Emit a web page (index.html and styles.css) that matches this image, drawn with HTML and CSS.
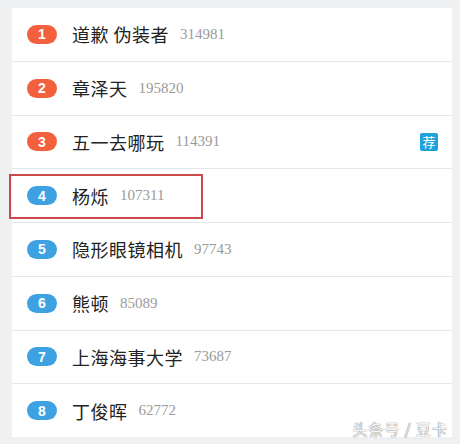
FILE: index.html
```html
<!DOCTYPE html>
<html>
<head>
<meta charset="utf-8">
<link rel="stylesheet" href="styles.css">
</head>
<body>
<div class="page">
  <ul class="list">
    <li class="row"><span class="rank hot">1</span><span class="name">道歉 伪装者</span><span class="count">314981</span></li>
    <li class="row"><span class="rank hot">2</span><span class="name">章泽天</span><span class="count">195820</span></li>
    <li class="row"><span class="rank hot">3</span><span class="name">五一去哪玩</span><span class="count">114391</span><span class="tag">荐</span></li>
    <li class="row"><span class="rank">4</span><span class="name">杨烁</span><span class="count">107311</span></li>
    <li class="row"><span class="rank">5</span><span class="name">隐形眼镜相机</span><span class="count">97743</span></li>
    <li class="row"><span class="rank">6</span><span class="name">熊顿</span><span class="count">85089</span></li>
    <li class="row"><span class="rank">7</span><span class="name">上海海事大学</span><span class="count">73687</span></li>
    <li class="row"><span class="rank">8</span><span class="name">丁俊晖</span><span class="count">62772</span></li>
  </ul>
  <div class="highlight"></div>
  <div class="watermark">头条号 / 豆卡</div>
</div>
</body>
</html>
```
FILE: styles.css
```css
html, body {
  margin: 0;
  padding: 0;
  background: #eff0f2;
}
.page {
  position: relative;
  width: 460px;
  height: 444px;
  padding: 8px 8px 0 12px;
  box-sizing: border-box;
  overflow: hidden;
}
.list {
  list-style: none;
  margin: 0;
  padding: 0;
  background: #fff;
}
.row {
  display: flex;
  align-items: center;
  height: 52.75px;
  border-bottom: 1px solid #e6e7ea;
  padding-left: 15px;
  padding-right: 14px;
}
.row:last-child {
  border-bottom: none;
}
.rank {
  display: inline-flex;
  align-items: center;
  justify-content: center;
  width: 30px;
  height: 19px;
  border-radius: 10px;
  background: #3ea2e2;
  color: #fff;
  font-family: "Liberation Sans", Arial, sans-serif;
  font-weight: bold;
  font-size: 14px;
  flex: none;
}
.rank.hot {
  background: #f3603d;
}
.name {
  margin-left: 15px;
  font-family: "Noto Sans CJK SC", sans-serif;
  font-size: 18px;
  color: #222;
  letter-spacing: 0.5px;
}
.count {
  margin-left: 11px;
  font-family: "Liberation Serif", serif;
  font-size: 15px;
  color: #9a9a9a;
}
.tag {
  margin-left: auto;
  width: 18px;
  height: 18px;
  border-radius: 2px;
  background: #1fa2da;
  color: #fff;
  font-family: "Noto Sans CJK SC", sans-serif;
  font-size: 13px;
  line-height: 18px;
  text-align: center;
}
.highlight {
  position: absolute;
  left: 9px;
  top: 174px;
  width: 190px;
  height: 41px;
  border: 2px solid #cc4a4d;
}
.watermark {
  position: absolute;
  right: 12px;
  top: 418px;
  font-family: "Noto Sans CJK SC", sans-serif;
  font-size: 15px;
  color: #f4f4f4;
  text-shadow: 0 0 1px #777, 0 0 1px #777;
  letter-spacing: 1px;
}
```
